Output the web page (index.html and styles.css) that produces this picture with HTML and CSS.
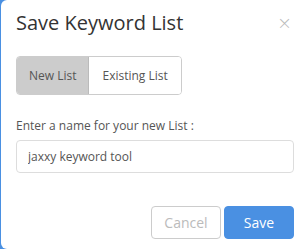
FILE: index.html
```html
<!DOCTYPE html>
<html lang="en">
<head>
    <meta charset="UTF-8">
    <title>Save Keyword List</title>
    <link rel="stylesheet" href="styles.css">
</head>
<body>
    <div class="modal">
        <!-- Header -->
        <div class="modal-header">
            <h2>Save Keyword List</h2>
            <button class="close" type="button">&times;</button>
        </div>

        <!-- Body -->
        <div class="modal-body">
            <div class="btn-group">
                <button type="button" class="active">New List</button>
                <button type="button">Existing List</button>
            </div>

            <label for="list-name">Enter a name for your new List :</label>
            <input type="text" id="list-name" value="jaxxy keyword tool">
        </div>

        <!-- Footer -->
        <div class="modal-footer">
            <button type="button" class="btn-cancel">Cancel</button>
            <button type="button" class="btn-save">Save</button>
        </div>
    </div>
</body>
</html>
```

FILE: styles.css
```css
html {
    overflow: hidden;
}

body {
    font-family: 'Open Sans', sans-serif;
    background: #4a90e2;
    margin: 0;
    padding: 0;
    color: #555;
}

.modal {
    background: #fff;
    margin: 0 -1px 0 1px;
    height: 249px;
    border-radius: 6px 0 0 6px;
    box-sizing: border-box;
}

.modal-header {
    display: flex;
    justify-content: space-between;
    align-items: center;
    padding: 12px 17px 0 15px;
}

.modal-header h2 {
    margin: 0;
    font-size: 20px;
    font-weight: 400;
    line-height: 22px;
    color: #333;
}

.close {
    border: none;
    background: none;
    padding: 0;
    font-family: 'DejaVu Sans', sans-serif;
    font-size: 18px;
    font-weight: 300;
    line-height: 22px;
    color: #bbb;
    cursor: pointer;
}

.modal-body {
    padding: 22px 15px 0;
}

.btn-group {
    display: inline-flex;
    border: 1px solid #ccc;
    border-radius: 4px;
    overflow: hidden;
    margin-bottom: 22px;
}

.btn-group button {
    font-family: inherit;
    font-size: 12px;
    line-height: 17px;
    padding: 10px 12px;
    border: none;
    background: #fff;
    color: #555;
    cursor: pointer;
}

.btn-group button:last-child {
    padding: 10px 13px;
}

.btn-group button.active {
    background: #ccc;
    border-right: 1px solid #bbb;
}

.modal-body label {
    display: block;
    font-size: 12px;
    line-height: 17px;
    margin-bottom: 6px;
    color: #555;
}

.modal-body input {
    width: 100%;
    height: 33px;
    box-sizing: border-box;
    padding: 0 11px;
    border: 1px solid #ddd;
    border-radius: 4px;
    font-family: inherit;
    font-size: 12px;
    color: #555;
}

.modal-footer {
    display: flex;
    justify-content: flex-end;
    gap: 3px;
    padding: 33px 15px 0 0;
}

.modal-footer button {
    width: 70px;
    height: 33px;
    font-family: inherit;
    font-size: 14px;
    border-radius: 4px;
    cursor: pointer;
}

.btn-cancel {
    background: #fff;
    border: 1px solid #ccc;
    color: #bbb;
}

.btn-save {
    background: #4a90e2;
    border: 1px solid #4a90e2;
    color: #fff;
}
```
